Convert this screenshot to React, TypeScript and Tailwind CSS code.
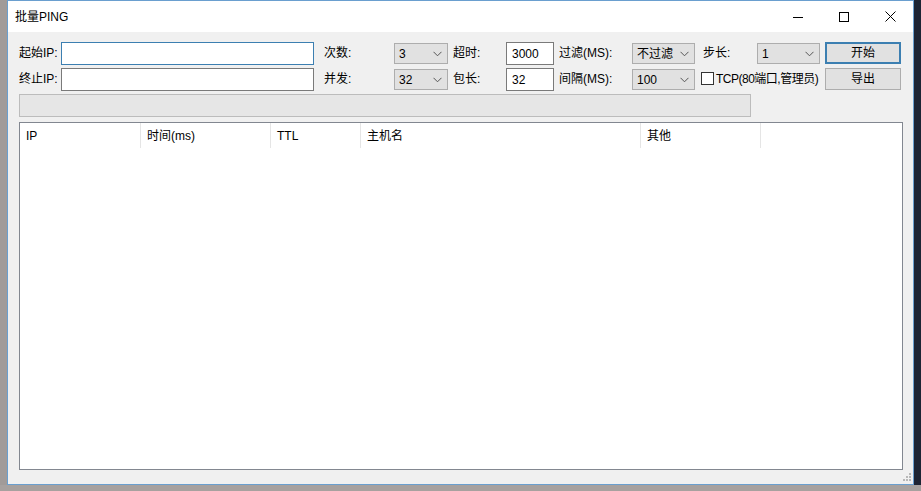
import React from 'react';

const font = { fontFamily: '"Liberation Sans", "Noto Sans CJK SC", sans-serif' };

function Chevron() {
  return (
    <svg width="9" height="6" viewBox="0 0 9 6" className="shrink-0">
      <path d="M0.5 0.8 L4.5 4.8 L8.5 0.8" stroke="#555" strokeWidth="1" fill="none" />
    </svg>
  );
}

function Select({ value, w }: { value: string; w: string }) {
  return (
    <div className={`${w} h-[21px] mt-[1px] border border-[#adadad] bg-[#e1e1e1] flex items-center pl-[4px] pr-[5px] justify-between`}>
      <span>{value}</span>
      <Chevron />
    </div>
  );
}

function Input({ value, w, focused }: { value?: string; w: string; focused?: boolean }) {
  return (
    <div
      className={`${w} h-[23px] border bg-white flex items-center pl-[5px] ${
        focused ? 'border-[#3c7fb1]' : 'border-[#7a7a7a]'
      }`}
    >
      {value}
    </div>
  );
}

export default function App() {
  return (
    <div className="w-[921px] h-[491px] flex flex-col bg-[#9e9897] overflow-hidden text-[12px] text-black" style={font}>
      <div className="flex h-[485px]">
        <div className="w-[7px] bg-[#a19b99]" />
        <div className="w-[907px] flex flex-col border border-[#6a9fcf] bg-[#f0f0f0]">
          {/* Title bar */}
          <div className="h-[31px] bg-white flex items-center shrink-0">
            <span className="pl-[7px] flex-1">批量PING</span>
            <div className="w-[46px] h-full flex items-center justify-center">
              <svg width="10" height="10" viewBox="0 0 10 10">
                <line x1="0" y1="5.5" x2="10" y2="5.5" stroke="#000" strokeWidth="1" />
              </svg>
            </div>
            <div className="w-[46px] h-full flex items-center justify-center">
              <svg width="10" height="10" viewBox="0 0 10 10">
                <rect x="0.5" y="0.5" width="9" height="9" stroke="#000" strokeWidth="1" fill="none" />
              </svg>
            </div>
            <div className="w-[46px] h-full flex items-center justify-center">
              <svg width="11" height="11" viewBox="0 0 11 11">
                <path d="M0.5 0.5 L10.5 10.5 M10.5 0.5 L0.5 10.5" stroke="#000" strokeWidth="1" />
              </svg>
            </div>
          </div>

          {/* Body */}
          <div className="flex-1 flex flex-col pl-[11px] pr-[10px] pt-[10px] pb-[14px]">
            <div className="flex items-start h-[23px]">
              <span className="w-[42px] leading-[23px]">起始IP:</span>
              <Input w="w-[253px]" focused />
              <span className="w-[70px] leading-[23px] pl-[10px] box-content">次数:</span>
              <Select value="3" w="w-[54px]" />
              <span className="w-[53px] leading-[23px] pl-[5px] box-content">超时:</span>
              <Input w="w-[48px]" value="3000" />
              <span className="w-[73px] leading-[23px] pl-[5px] box-content">过滤(MS):</span>
              <Select value="不过滤" w="w-[63px]" />
              <span className="w-[54px] leading-[23px] pl-[8px] box-content">步长:</span>
              <Select value="1" w="w-[63px]" />
              <div className="ml-[5px] w-[76px] h-[22px] border-2 border-[#3c7fb1] bg-[#e1e1e1] flex items-center justify-center">
                开始
              </div>
            </div>
            <div className="flex items-start h-[23px] mt-[3px]">
              <span className="w-[42px] leading-[23px]">终止IP:</span>
              <Input w="w-[253px]" />
              <span className="w-[70px] leading-[23px] pl-[10px] box-content">并发:</span>
              <Select value="32" w="w-[54px]" />
              <span className="w-[53px] leading-[23px] pl-[5px] box-content">包长:</span>
              <Input w="w-[48px]" value="32" />
              <span className="w-[73px] leading-[23px] pl-[5px] box-content">间隔(MS):</span>
              <Select value="100" w="w-[63px]" />
              <div className="flex items-center h-[21px] ml-[6px] w-[124px] gap-[2px] whitespace-nowrap">
                <div className="w-[13px] h-[13px] shrink-0 border border-[#333] bg-white" />
                <span className="tracking-[-0.5px]">TCP(80端口,管理员)</span>
              </div>
              <div className="w-[76px] h-[22px] border border-[#adadad] bg-[#e1e1e1] flex items-center justify-center">
                导出
              </div>
            </div>

            {/* Progress bar */}
            <div className="w-[732px] h-[23px] mt-[3px] border border-[#bcbcbc] bg-[#e6e6e6]" />

            {/* List view */}
            <div className="flex-1 mt-[5px] border border-[#828790] bg-white">
              <div className="flex h-[25px] items-center">
                {[
                  ['IP', 'w-[121px]'],
                  ['时间(ms)', 'w-[130px]'],
                  ['TTL', 'w-[90px]'],
                  ['主机名', 'w-[280px]'],
                  ['其他', 'w-[120px]'],
                ].map(([t, w]) => (
                  <div key={t} className={`${w} h-full flex items-center pl-[6px] border-r border-[#e5e5e5]`}>
                    {t}
                  </div>
                ))}
              </div>
            </div>
          </div>
          <div className="relative">
            <svg width="8" height="8" viewBox="0 0 8 8" className="absolute right-[2px] bottom-[3px]">
              <rect x="6" y="0" width="2" height="2" fill="#b8b8b8" />
              <rect x="3" y="3" width="2" height="2" fill="#b8b8b8" />
              <rect x="6" y="3" width="2" height="2" fill="#b8b8b8" />
              <rect x="0" y="6" width="2" height="2" fill="#b8b8b8" />
              <rect x="3" y="6" width="2" height="2" fill="#b8b8b8" />
              <rect x="6" y="6" width="2" height="2" fill="#b8b8b8" />
            </svg>
          </div>
        </div>
        <div className="flex-1 bg-[#1d2434]" />
      </div>
      <div className="flex-1 bg-[#a7a19f]" />
    </div>
  );
}
